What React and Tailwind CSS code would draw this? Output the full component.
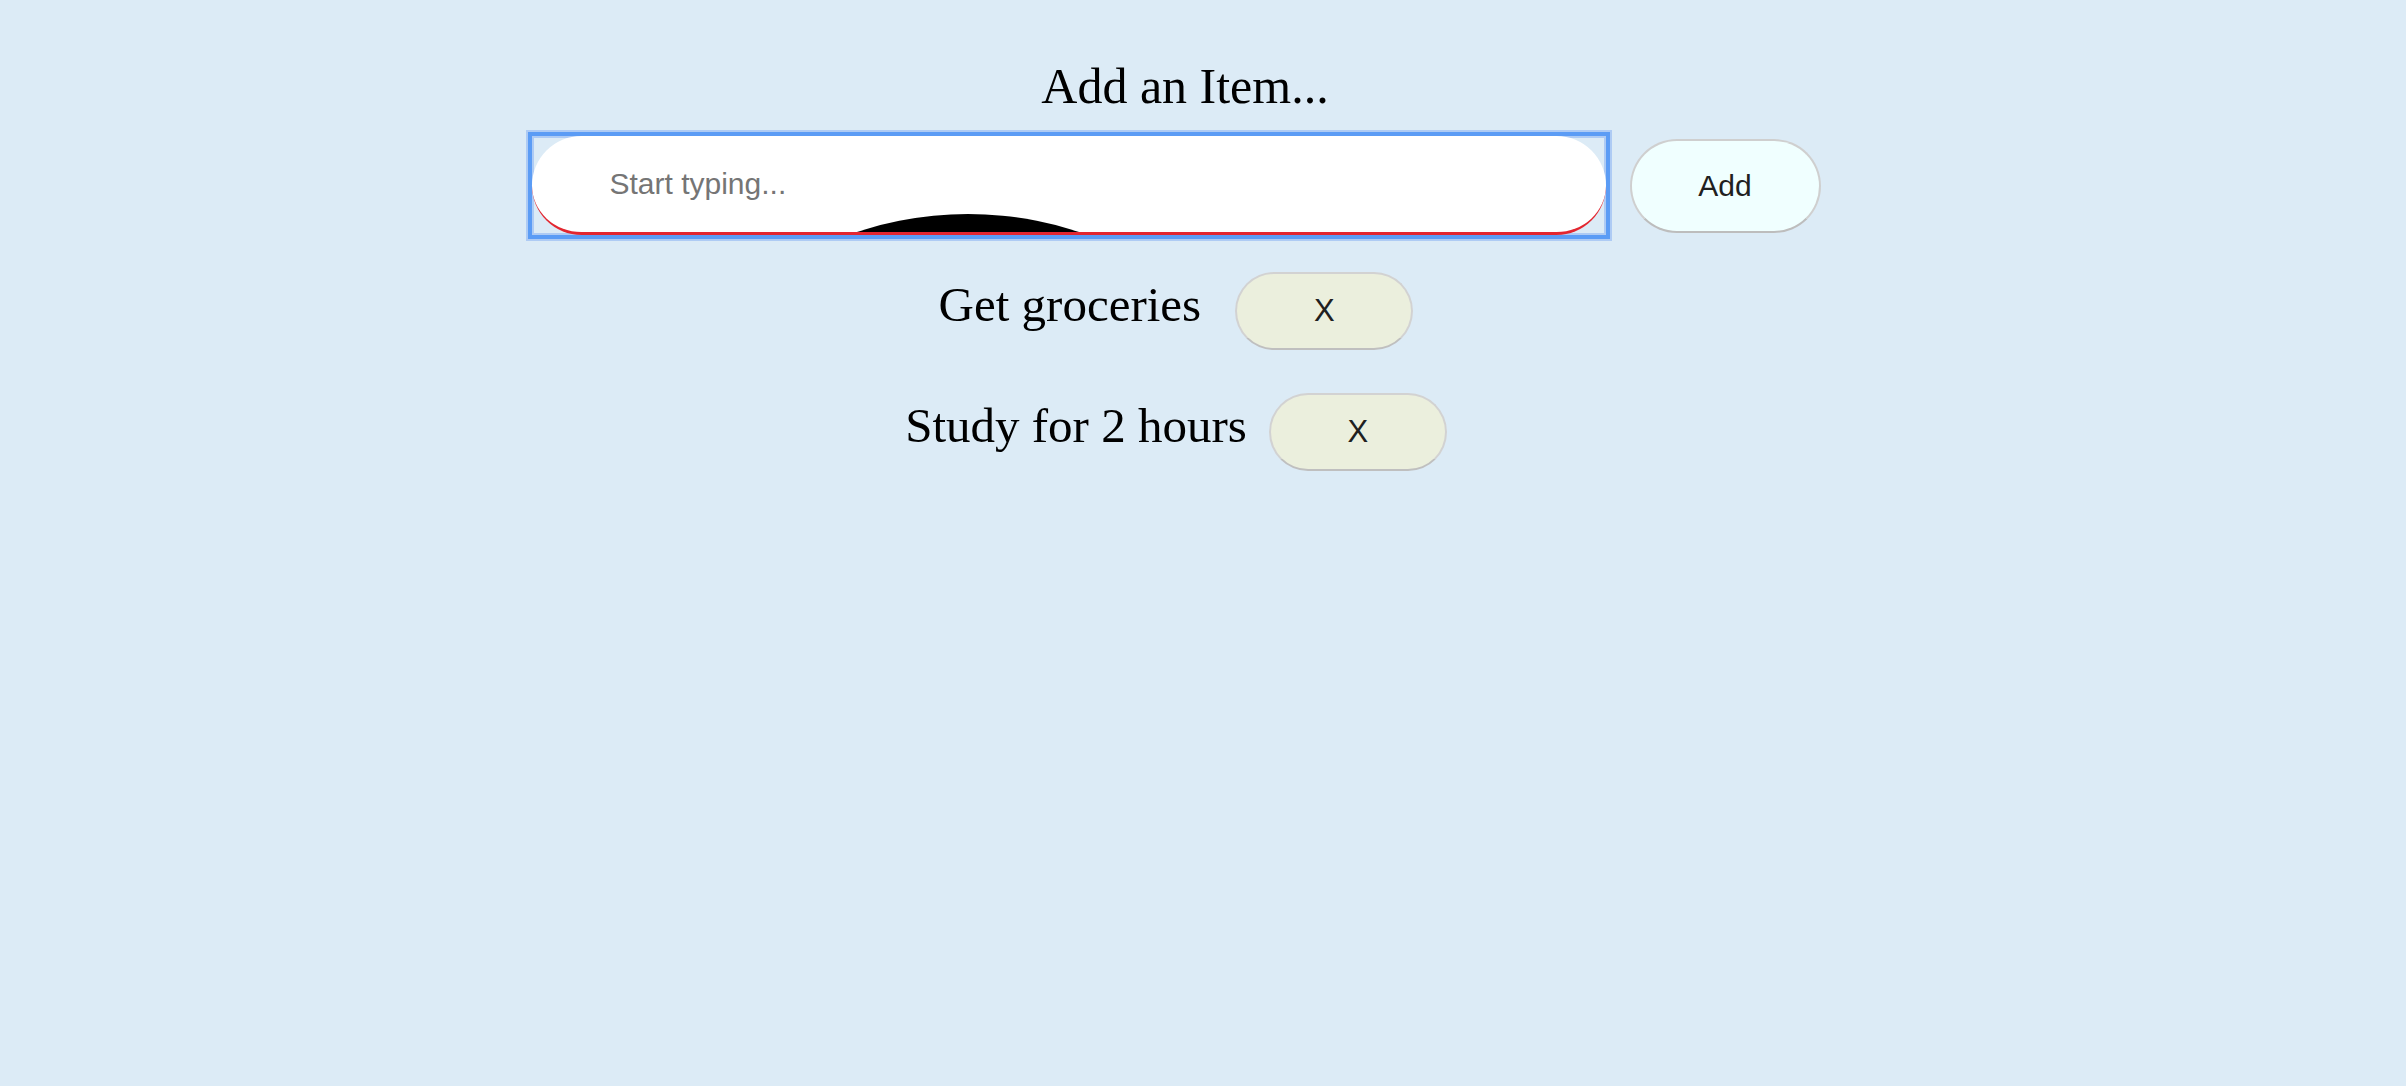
import { useState } from "react";

export default function App() {
  const [text, setText] = useState("");
  const [items, setItems] = useState(["Get groceries ", "Study for 2 hours"]);

  const handleSubmit = (e) => {
    e.preventDefault();
    if (!text.trim()) return;
    setItems([...items, text]);
    setText("");
  };

  return (
    <div className="min-h-screen bg-[#dcebf6]">
      <div className="flex w-[2352px] flex-col items-center pt-[58px]">
        <h2 className="pl-[18px] font-['Liberation_Serif',serif] text-[50px] font-normal leading-[56px] text-black">
          Add an Item...
        </h2>

        <form onSubmit={handleSubmit} className="mt-[22px] flex items-center gap-[24px]">
          {/* focus ring stays square while the field itself is a pill */}
          <div className="h-[99px] w-[1074px] outline-[4px] outline-solid outline-[#5b9cf5] shadow-[0_0_0_6px_#aecbf4,inset_0_0_0_2px_#aecbf4]">
            <div className="relative flex h-full w-full overflow-hidden rounded-full border-b-[3px] border-b-[#e3262f] bg-white">
              <div className="absolute left-[84px] top-[78px] h-[704px] w-[704px] rounded-full bg-black" />
              <input
                type="text"
                placeholder="Start typing..."
                value={text}
                onChange={(e) => setText(e.target.value)}
                className="relative h-full w-full bg-transparent pl-[78px] font-['Liberation_Sans',sans-serif] text-[30px] text-[#222] outline-none placeholder:text-[#757575]"
              />
            </div>
          </div>
          <button
            type="submit"
            className="h-[94px] w-[191px] rounded-full border-2 border-[#cfcfcf] border-b-[#bdbdbd] bg-[#f0ffff] font-['Liberation_Sans',sans-serif] text-[30px] text-[#202020]"
          >
            Add
          </button>
        </form>

        <ul className="mt-[37px] flex flex-col items-center gap-[43px]">
          {items.map((item, i) => (
            <li key={i} className="flex items-baseline">
              <span className="whitespace-pre font-['Liberation_Serif',serif] text-[49px] leading-[56px] text-black">
                {item}
              </span>
              <button
                onClick={() => setItems(items.filter((_, j) => j !== i))}
                className="ml-[22px] h-[78px] w-[178px] rounded-full border-2 border-[#d2d2d2] border-b-[#bfbfbf] bg-[#ebefdd] font-['Liberation_Sans',sans-serif] text-[31px] text-[#202020]"
              >
                X
              </button>
            </li>
          ))}
        </ul>
      </div>
    </div>
  );
}
